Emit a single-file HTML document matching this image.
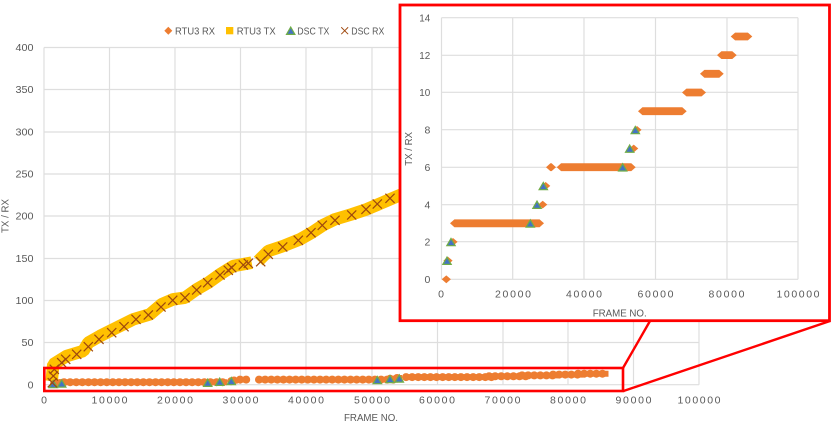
<!DOCTYPE html>
<html><head><meta charset="utf-8"><style>
html,body{margin:0;padding:0;background:#fff;width:831px;height:422px;overflow:hidden}
svg{display:block}
text{font-family:"Liberation Sans",sans-serif;font-size:10.5px;fill:#595959}
</style></head><body>
<svg width="831" height="422" viewBox="0 0 831 422" xmlns="http://www.w3.org/2000/svg">
<defs>
<path id="t" d="M0 -3.9L4.2 3.4H-4.2Z" fill="#4472C4" stroke="#70AD47" stroke-width="1.2"/>
<path id="x" d="M-4.6 -4.6L4.6 4.6M4.6 -4.6L-4.6 4.6" fill="none" stroke="#9E480E" stroke-width="1.2"/>
</defs>
<!-- main grid -->
<path d="M44 47.5V384.7M109.5 47.5V384.7M175 47.5V384.7M240.5 47.5V384.7M306 47.5V384.7M372 47.5V384.7M437.5 47.5V384.7M503 47.5V384.7M568 47.5V384.7M633.5 47.5V384.7M699 47.5V384.7M44 47.5H699M44 89.5H699M44 132H699M44 174H699M44 216H699M44 258.5H699M44 300.5H699M44 342.5H699M44 384.7H699" stroke="#DEDEDE" stroke-width="1.2" fill="none"/>
<!-- yellow -->
<g fill="none" stroke="#FFC000" stroke-width="12.5" stroke-linejoin="bevel">
<path d="M51.7 381L53.3 364.3L66.7 356L83.3 351L88.3 342.7L100 336L113.3 329.3L133.3 319.3L150 314.3L161.7 304.3L173.3 299.3L185 297.7L196.7 289.3L208.3 282.7L220 274.3L233.3 266L251.7 262.7"/>
<path d="M258.3 261L268.3 251L283.3 246L300 239.3L311.7 232.7L323.3 225L335 219.3L351.7 214.3L366.7 209.3L405 193"/>
</g>
<!-- orange main -->
<g fill="none" stroke="#ED7D31">
<g stroke-width="6">
<path d="M64 382.2H227M231 381.3H233M234 380.5H238M240 379.6H249M259 379.6H398M390 378.8H396M397 378H402M406 377.1H492M489 376.3H526M522 375.4H558M553 374.6H583M578 373.7H608.5"/>
</g>
<g stroke-width="8" stroke-linecap="round" stroke-dasharray="0.1 6">
<path d="M64 382.2H227M231 381.3H233M234 380.5H238M240 379.6H249M259 379.6H398M390 378.8H396M397 378H402M406 377.1H492M489 376.3H526M522 375.4H558M553 374.6H583M578 373.7H608.5M54 384V384.1M58 383.5V383.6M60 383V383.1"/>
</g>
</g>
<use href="#t" x="53.3" y="384.3"/><use href="#t" x="61.7" y="383.7"/><use href="#t" x="207.7" y="383"/><use href="#t" x="219.7" y="382"/><use href="#t" x="231.3" y="381.3"/><use href="#t" x="377.3" y="380.3"/><use href="#t" x="390" y="379.3"/><use href="#t" x="399.3" y="378.7"/>
<!-- X marks -->
<use href="#x" x="52.3" y="382.7"/><use href="#x" x="53.3" y="376"/><use href="#x" x="54.3" y="369.3"/><use href="#x" x="61.7" y="362.7"/><use href="#x" x="65.7" y="359.3"/><use href="#x" x="76.7" y="354.3"/><use href="#x" x="88.3" y="346.7"/><use href="#x" x="99" y="339.3"/><use href="#x" x="111.7" y="332.7"/><use href="#x" x="124" y="326.7"/><use href="#x" x="136" y="319.3"/><use href="#x" x="148.3" y="315"/><use href="#x" x="161" y="307"/><use href="#x" x="172.7" y="300.3"/><use href="#x" x="185" y="297.7"/><use href="#x" x="196.7" y="290"/><use href="#x" x="207.7" y="282.7"/><use href="#x" x="220" y="275"/><use href="#x" x="228.3" y="270.3"/><use href="#x" x="231.7" y="267.7"/><use href="#x" x="243.3" y="265"/><use href="#x" x="248.3" y="263.3"/><use href="#x" x="260.7" y="261.7"/><use href="#x" x="268.3" y="254.3"/><use href="#x" x="282.7" y="247"/><use href="#x" x="298.3" y="240.3"/><use href="#x" x="311" y="232.7"/><use href="#x" x="322.3" y="225.3"/><use href="#x" x="335" y="220.3"/><use href="#x" x="351.7" y="215"/><use href="#x" x="366" y="209.3"/><use href="#x" x="377.3" y="204"/><use href="#x" x="390" y="198.3"/>
<!-- main labels -->
<g text-anchor="end">
<text x="33.5" y="51.2" textLength="18" lengthAdjust="spacingAndGlyphs">400</text>
<text x="33.5" y="93.2" textLength="18" lengthAdjust="spacingAndGlyphs">350</text>
<text x="33.5" y="135.7" textLength="18" lengthAdjust="spacingAndGlyphs">300</text>
<text x="33.5" y="177.7" textLength="18" lengthAdjust="spacingAndGlyphs">250</text>
<text x="33.5" y="219.7" textLength="18" lengthAdjust="spacingAndGlyphs">200</text>
<text x="33.5" y="262.2" textLength="18" lengthAdjust="spacingAndGlyphs">150</text>
<text x="33.5" y="304.2" textLength="18" lengthAdjust="spacingAndGlyphs">100</text>
<text x="33.5" y="346.2" textLength="12" lengthAdjust="spacingAndGlyphs">50</text>
<text x="33.5" y="388.4">0</text>
</g>
<g text-anchor="middle">
<text x="44" y="403.6">0</text>
<text x="109.5" y="403.6" textLength="36" lengthAdjust="spacing">10000</text>
<text x="175" y="403.6" textLength="36" lengthAdjust="spacing">20000</text>
<text x="240.5" y="403.6" textLength="36" lengthAdjust="spacing">30000</text>
<text x="306" y="403.6" textLength="36" lengthAdjust="spacing">40000</text>
<text x="372" y="403.6" textLength="36" lengthAdjust="spacing">50000</text>
<text x="437" y="403.6" textLength="36" lengthAdjust="spacing">60000</text>
<text x="502.5" y="403.6" textLength="36" lengthAdjust="spacing">70000</text>
<text x="568" y="403.6" textLength="36" lengthAdjust="spacing">80000</text>
<text x="633.5" y="403.6" textLength="36" lengthAdjust="spacing">90000</text>
<text x="699" y="403.6" textLength="43" lengthAdjust="spacing">100000</text>
</g>
<text x="344" y="421" textLength="54" lengthAdjust="spacingAndGlyphs">FRAME NO.</text>
<text transform="translate(8.5 233) rotate(-90)" textLength="34" lengthAdjust="spacingAndGlyphs">TX / RX</text>
<!-- legend -->
<path d="M168.3 26.7L172.3 30.7L168.3 34.7L164.3 30.7Z" fill="#ED7D31"/>
<text x="175" y="34.6" textLength="40" lengthAdjust="spacingAndGlyphs">RTU3 RX</text>
<rect x="226" y="27" width="7.3" height="7.3" fill="#FFC000"/>
<text x="236.7" y="34.6" textLength="39" lengthAdjust="spacingAndGlyphs">RTU3 TX</text>
<use href="#t" x="290.7" y="31"/>
<text x="297.3" y="34.6" textLength="32" lengthAdjust="spacingAndGlyphs">DSC TX</text>
<use href="#x" x="344.7" y="30.7" transform="translate(344.7 30.7) scale(.75) translate(-344.7 -30.7)"/>
<text x="351.3" y="34.6" textLength="33" lengthAdjust="spacingAndGlyphs">DSC RX</text>
<!-- callout -->
<g fill="none" stroke="#FF0000">
<rect x="44.3" y="368" width="578.7" height="23" stroke-width="2.6"/>
<path d="M623 368L650 321M623.5 391L830 321" stroke-width="2.4"/>
</g>
<rect x="400" y="5" width="429.5" height="315.7" fill="#fff" stroke="#FF0000" stroke-width="2.8"/>
<!-- inset grid -->
<path d="M441.5 17.7V279.3M512.7 17.7V279.3M584 17.7V279.3M655.5 17.7V279.3M727 17.7V279.3M798 17.7V279.3M441.5 17.7H798M441.5 55.3H798M441.5 92.3H798M441.5 129.7H798M441.5 167.3H798M441.5 204.7H798M441.5 241.7H798M441.5 279.3H798" stroke="#DEDEDE" stroke-width="1.2" fill="none"/>
<!-- inset orange -->
<g fill="#ED7D31">
<path d="M450 223.3l4.4 -3.9H539.6l4.4 3.9l-4.4 3.9H454.4Z"/>
<path d="M546 167.2l4.4 -3.9H551.6l4.4 3.9l-4.4 3.9H550.4Z"/>
<path d="M556.7 167.2l4.4 -3.9H631.3l4.4 3.9l-4.4 3.9H561.1Z"/>
<path d="M638 111.2l4.4 -3.9H682.3l4.4 3.9l-4.4 3.9H642.4Z"/>
<path d="M682 92.5l4.4 -3.9H701.6l4.4 3.9l-4.4 3.9H686.4Z"/>
<path d="M700 73.8l4.4 -3.9H719.3l4.4 3.9l-4.4 3.9H704.4Z"/>
<path d="M717 55.1l4.4 -3.9H732.3l4.4 3.9l-4.4 3.9H721.4Z"/>
<path d="M730.7 36.5l4.4 -3.9H747.9l4.4 3.9l-4.4 3.9H735.1Z"/>
<path d="M446.3 275.4l4.6 3.9l-4.6 3.9l-4.6 -3.9Z"/>
<path d="M448 256.7l4.6 3.9l-4.6 3.9l-4.6 -3.9Z"/>
<path d="M453 238l4.6 3.9l-4.6 3.9l-4.6 -3.9Z"/>
<path d="M542.7 200.7l4.6 3.9l-4.6 3.9l-4.6 -3.9Z"/>
<path d="M545.7 182l4.6 3.9l-4.6 3.9l-4.6 -3.9Z"/>
<path d="M633.7 144.6l4.6 3.9l-4.6 3.9l-4.6 -3.9Z"/>
<path d="M637 126l4.6 3.9l-4.6 3.9l-4.6 -3.9Z"/>
</g>
<use href="#t" x="447" y="261"/><use href="#t" x="451" y="242.3"/><use href="#t" x="530.3" y="223.7"/><use href="#t" x="537" y="205"/><use href="#t" x="543.3" y="186.3"/><use href="#t" x="622.7" y="167.6"/><use href="#t" x="629.7" y="148.9"/><use href="#t" x="635.3" y="130.3"/>
<!-- inset labels -->
<g text-anchor="end">
<text x="430.3" y="21.3" textLength="11" lengthAdjust="spacingAndGlyphs">14</text>
<text x="430.3" y="58.9" textLength="11" lengthAdjust="spacingAndGlyphs">12</text>
<text x="430.3" y="95.9" textLength="11" lengthAdjust="spacingAndGlyphs">10</text>
<text x="430.3" y="133.3">8</text>
<text x="430.3" y="170.9">6</text>
<text x="430.3" y="208.3">4</text>
<text x="430.3" y="245.3">2</text>
<text x="430.3" y="282.9">0</text>
</g>
<g text-anchor="middle">
<text x="441" y="297.6">0</text>
<text x="513" y="297.6" textLength="36" lengthAdjust="spacing">20000</text>
<text x="584" y="297.6" textLength="36" lengthAdjust="spacing">40000</text>
<text x="655.5" y="297.6" textLength="36" lengthAdjust="spacing">60000</text>
<text x="726.5" y="297.6" textLength="36" lengthAdjust="spacing">80000</text>
<text x="798" y="297.6" textLength="43" lengthAdjust="spacing">100000</text>
</g>
<text x="592.7" y="316.3" textLength="54" lengthAdjust="spacingAndGlyphs">FRAME NO.</text>
<text transform="translate(411.8 165.7) rotate(-90)" textLength="33.7" lengthAdjust="spacingAndGlyphs">TX / RX</text>
</svg>
</body></html>
